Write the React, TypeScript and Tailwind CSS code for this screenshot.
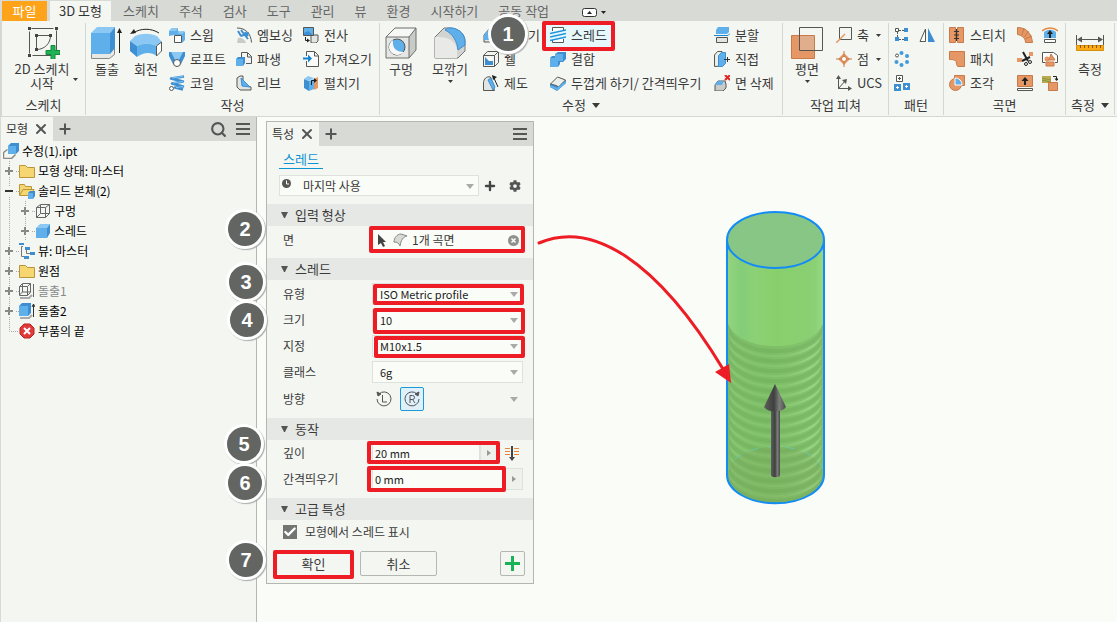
import { useState } from 'react';
import type { ReactNode } from 'react';
import { Plus, Search, X, Check } from 'lucide-react';
import { FaCog } from 'react-icons/fa';

const BLUE = '#5fb0ea';
const DEEP = '#3d8fd2';
const LIGHT = '#8cc8f4';
const LINE = '#555753';
const ORANGE = '#e59866';
const RUST = '#c87a48';

/* ---------- icons ---------- */

function Svg({ size = 16, children }: { size?: number; children: ReactNode }) {
  return (
    <svg width={size} height={size} viewBox={`0 0 ${size} ${size}`} fill="none" className="shrink-0" aria-hidden="true">
      {children}
    </svg>
  );
}

const MenuIcon = () => (
  <Svg>
    <path d="M1 3h14M1 8h14M1 13h14" stroke={LINE} strokeWidth="2" />
  </Svg>
);

const SketchIcon = () => (
  <Svg size={32}>
    <path d="M1.500 1.500h27v27h-27z" stroke={LINE} strokeDasharray="22 5" strokeDashoffset="-2" />
    <path d="M8.500 8.500h14M8.500 8.500v14M22.500 8.500c0 8-6 14-14 14" stroke={LINE} />
    <path d="M0 0h3v3H0zM27 0h3v3h-3zM0 27h3v3H0zM7 7h3v3H7zM21 7h3v3h-3zM7 21h3v3H7z" fill="#444" />
    <path d="M23 18.500h4v5h5v4h-5v5h-4v-5h-5v-4h5z" fill="#1fb254" stroke="#128a3c" />
  </Svg>
);

const ExtrudeIcon = () => (
  <Svg size={32}>
    <path d="M.500 27v4.500h18l5-4V21" fill="#e6e8e4" stroke="#888" />
    <path d="M0 6l6-6h18l-5 6z" fill={LIGHT} />
    <path d="M0 6h19v21H0z" fill={BLUE} />
    <path d="M19 6l5-6v21l-5 6z" fill={DEEP} />
    <path d="M28.500 26V3" stroke="#222" />
    <path d="M28.500 1L26 6h5z" fill="#222" />
  </Svg>
);

const RevolveIcon = () => (
  <Svg size={32}>
    <path d="M0 14l5-5c8-3 14-3 22 0l5 6-5 4c-7-3-14-3-20 0z" fill={LIGHT} />
    <path d="M0 14l7 5v11l-7-6z" fill={DEEP} />
    <path d="M7 19c6-3 13-3 20 0v10c-6-4-13-4-20 1z" fill={BLUE} />
    <path d="M26.500 19l5-4v9l-5 5z" fill="#fff" stroke={LINE} />
    <path d="M3 6c8-5 18-5 26 0" stroke="#222" />
    <path d="M0 7l4-5 2 4z" fill="#222" />
  </Svg>
);

const HoleIcon = () => (
  <Svg size={32}>
    <path d="M1 10L10 1h21l-7 9z" fill="#f7f8f6" />
    <path d="M24 10l7-9v22l-7 8z" fill="#c9cbc8" />
    <path d="M1 10h23v21H1z" fill="#e6e7e5" />
    <path d="M1 10l9-9h21v22l-7 8H1zM1 10h23v21M24 10l7-9" stroke="#6c6e6b" />
    <circle cx="12" cy="20" r="8" fill={BLUE} stroke={LINE} />
    <path d="M8 13c-1 8 3 12 11 12-6 6-15 2-15-5 0-3 2-6 4-7z" fill="#f7f8f6" />
  </Svg>
);

const FilletIcon = () => (
  <Svg size={32}>
    <path d="M1 31V10l9-9h7c9 1 14 7 14 13v10l-7 7z" fill="#d2d4d1" stroke="#777" />
    <path d="M1 31V10h4c11 0 18 6 18 14v7z" fill="#e9eae8" />
    <path d="M11 3l3-2h4c8 1 13 7 13 14v3l-7 5C23 14 19 7 11 3z" fill={BLUE} stroke={DEEP} />
  </Svg>
);

const PlaneIcon = () => (
  <Svg size={32}>
    <path d="M.500 8.500h23v23H.500z" fill={ORANGE} stroke={RUST} />
    <path d="M8.500.500h23v23h-23z" stroke={LINE} />
    <path d="M9 9h14v14H9z" fill="#e0ae8c" />
  </Svg>
);

const MeasureIcon = () => (
  <Svg size={32}>
    <path d="M2.500 8v10M29.500 8v10M4 12.500h24" stroke={LINE} />
    <path d="M3 12.500l5-3v6zM29 12.500l-5-3v6z" fill={LINE} />
    <path d="M2.500 18.500h27v5h-27z" fill="#fbab18" stroke="#d68f0c" />
    <path d="M6.500 18v3M10.500 18v3M14.500 18v3M18.500 18v3M22.500 18v3M26.500 18v3" stroke="#8a5a00" />
  </Svg>
);

const SweepIcon = () => (
  <Svg>
    <path d="M0 4l3-3h6v3l3 1h4v8l-3 3V8H5L0 9z" fill={BLUE} />
    <path d="M0 4l3-3h6L7 4zM8 6l4-2h4l-3 3z" fill={LIGHT} />
    <path d="M5.500 8.500h7v7h-7z" fill="#fff" stroke={LINE} />
  </Svg>
);

const LoftIcon = () => (
  <Svg>
    <path d="M0 1h16v4l-4 8-4 3-4-3-4-8z" fill={DEEP} />
    <path d="M2 1h12l-4 8H6z" fill={LIGHT} />
    <circle cx="8" cy="12" r="3.500" fill="#fff" stroke={LINE} />
  </Svg>
);

const CoilIcon = () => (
  <Svg>
    <path d="M15 1.500L2 3.500l12 3-11 2 11 3-8 1 8 2" stroke={DEEP} strokeWidth="2.500" strokeLinejoin="round" />
    <path d="M14 1.500L3 3M14 6.500L4 8M14 11.500l-7 1" stroke={LIGHT} />
    <circle cx="2.500" cy="13.500" r="2" fill="#fff" stroke={LINE} />
  </Svg>
);

const EmbossIcon = () => (
  <Svg>
    <path d="M1 1c9 0 14 6 14.500 14.500" stroke={LINE} />
    <path d="M1 16l1-5c3-1 7 1 8 5z" fill="#c9cbc8" />
    <path d="M2 4l3 5M5 3l3 4 4 5M5 9l8-3M9 5l3 4" stroke={DEEP} strokeWidth="2" />
  </Svg>
);

const DeriveIcon = () => (
  <Svg>
    <path d="M5.500 6V1.500h6l4 4v7H10" fill="#f4f4f4" stroke={LINE} />
    <path d="M11.500 2v4h4" stroke={LINE} />
    <path d="M0 8l2-2h7v6l-2 3H0z" fill={DEEP} />
    <path d="M0 8h7v7H0z" fill={BLUE} />
  </Svg>
);

const RibIcon = () => (
  <Svg>
    <path d="M1 3l3-2h3v8l8 3v3H4l-3-3z" fill="#e3e5e2" stroke={LINE} />
    <path d="M5 3l9 9-8-1z" fill={BLUE} stroke={DEEP} />
  </Svg>
);

const DecalIcon = () => (
  <Svg>
    <path d="M8 8h7v6l-2 2H8z" fill="#e3e5e2" stroke={LINE} />
    <path d="M.500.500h10v8H.500z" fill={BLUE} stroke={LINE} />
    <path d="M1 6l4-2 5 4H1z" fill={DEEP} />
    <path d="M2.500 10v3.500H6" stroke="#222" />
    <path d="M7 13.500l-3-2v4z" fill="#222" />
  </Svg>
);

const ImportIcon = () => (
  <Svg>
    <path d="M3.500 5V.500h8l4 4v11h-12V10" fill="#fafafa" stroke={LINE} />
    <path d="M11.500 1v4h4" stroke={LINE} />
    <path d="M0 7.500h6" stroke="#1685d1" strokeWidth="2" />
    <path d="M9 7.500l-4-4v8z" fill="#1685d1" />
  </Svg>
);

const UnfoldIcon = () => (
  <Svg>
    <path d="M1 4l5 2v10l-5-3z" fill={DEEP} />
    <path d="M6 6l5-2v10l-5 2z" fill={BLUE} />
    <path d="M1 4l4-3 6 2-5 3z" fill={LIGHT} />
    <path d="M11 4l4-2v11l-4 2z" fill={ORANGE} />
    <path d="M8.500 10V5.500H12" stroke="#222" />
    <path d="M14 5.500L11 3v5z" fill="#222" />
  </Svg>
);

const ChamferIcon = () => (
  <Svg>
    <path d="M1 8l6-7h4l4 5v6l-4 3H1z" fill="#e3e5e2" stroke={LINE} />
    <path d="M1 8l6-7 4 6-5 6H1z" fill={BLUE} />
  </Svg>
);

const ShellIcon = () => (
  <Svg>
    <path d="M.500 4.500l4-4h11v11l-4 4H.500z" fill="#f3f4f2" stroke={LINE} />
    <path d="M.500 4.500h11v11M11.500 4.500l4-4" stroke={LINE} />
    <path d="M3 7h6v6H3z" fill="#fff" />
    <path d="M2 6l4 4h4v4H2z" fill={DEEP} />
  </Svg>
);

const DraftIcon = () => (
  <Svg>
    <path d="M.500 15.500V8c0-4 3-7 7-6l4 13.500z" fill="#e3e5e2" stroke={LINE} />
    <path d="M5 5l3-2 4 9-2 3z" fill={BLUE} stroke={DEEP} />
    <path d="M10 1l5 11" stroke="#222" />
    <path d="M9 0l5 2-4 3z" fill="#222" />
  </Svg>
);

const ThreadIcon = () => (
  <Svg>
    <path d="M2.500 4V.500h11V3M2.500 13v2.500h11V12" fill="#fff" stroke={LINE} />
    <path d="M0 6.500L16 3M0 10l16-3.500M0 13.500L16 10" stroke="#1f94dc" strokeWidth="1.300" />
  </Svg>
);

const CombineIcon = () => (
  <Svg>
    <path d="M5 3l3-2h8v7l-3 3H10v2l-2 3H0V7l2-2h3z" fill={DEEP} />
    <path d="M5 3h8v7H8v6H0V7h5z" fill={BLUE} />
  </Svg>
);

const ThickenIcon = () => (
  <Svg>
    <path d="M0 9v3l7 4 9-8V5z" fill={DEEP} />
    <path d="M.500 9l7-7 8 3-7 7c-2-2-5-2-8-3z" fill="#eceeeb" stroke={LINE} />
    <path d="M0 11l7 3 9-7" stroke={BLUE} strokeWidth="2" />
  </Svg>
);

const SplitIcon = () => (
  <Svg>
    <path d="M2 3l2-3h11v5l-2 2H2z" fill={BLUE} />
    <path d="M0 8.500h14l2-2" stroke="#1685d1" />
    <path d="M2.500 10.500h11v5h-11z" fill="#e3e5e2" stroke={LINE} />
  </Svg>
);

const DirectIcon = () => (
  <Svg>
    <path d="M.500 15.500V4l3-3.500H8V15z" fill="#eceeeb" stroke={LINE} />
    <path d="M4.500 4.500l3-3h4v11l-3 3h-4z" fill={BLUE} stroke={DEEP} />
    <path d="M10 8.500h6M13.500 6v5" stroke="#333" />
  </Svg>
);

const DeleteFaceIcon = () => (
  <Svg>
    <path d="M1 10l3-4h7l1 3v4l-3 3H1z" fill="#c9cbc8" stroke={LINE} />
    <path d="M1 10l3-4h6l-2 4z" fill={BLUE} />
    <path d="M11 0l5 5M16 0l-5 5" stroke="#e02424" strokeWidth="2" />
  </Svg>
);

const AxisIcon = () => (
  <Svg>
    <path d="M3.500.500h12v12h-12z" stroke={LINE} />
    <path d="M0 16L9 7" stroke={ORANGE} strokeWidth="1.500" />
  </Svg>
);

const PointIcon = () => (
  <Svg>
    <path d="M8 2l6 6-6 6-6-6z" fill={ORANGE} />
    <path d="M8 0v16M0 8h16" stroke={RUST} />
    <circle cx="8" cy="8" r="2.500" fill="#fff" stroke={RUST} />
  </Svg>
);

const UcsIcon = () => (
  <Svg>
    <path d="M2.500 2v11.500H14M2.500 13.500L9 6" stroke={LINE} />
    <path d="M2.500 0L0 4h5zM16 13.500L12 11v5zM11 4L6 5l4 4z" fill={LINE} />
  </Svg>
);

const RectPatternIcon = () => (
  <Svg>
    <path d="M3.500 5v6M5 3.500h6M5 12.500h5" stroke={LINE} strokeDasharray="2 1" />
    <path d="M1.500 1.500h3v3h-3z" fill="#fff" stroke={LINE} />
    <path d="M10 1h4v4h-4zM1 10h4v4H1zM10 10h4v4h-4z" fill={DEEP} />
  </Svg>
);

const CircPatternIcon = () => (
  <Svg>
    <circle cx="3" cy="4.500" r="1.500" fill="#fff" stroke={LINE} />
    <g fill="#3f9ade">
      <circle cx="7.500" cy="2" r="2" />
      <circle cx="13" cy="5" r="2" />
      <circle cx="13" cy="11" r="2" />
      <circle cx="7.500" cy="14" r="2" />
      <circle cx="2.500" cy="11" r="2" />
    </g>
  </Svg>
);

const SketchPatternIcon = () => (
  <Svg>
    <path d="M2.500.500h6v6h-6z" fill="#fff" stroke={LINE} />
    <path d="M0 9h7v7H0zM9 8h7v7H9z" fill={DEEP} />
    <path d="M4 3.500h3M5.500 2v3" stroke={LINE} />
    <path d="M2 12.500h3M3.500 11v3M11 11.500h3M12.500 10v3" stroke="#fff" />
  </Svg>
);

const MirrorIcon = () => (
  <Svg>
    <path d="M6.500 2v12.500H1z" fill="#fff" stroke={LINE} />
    <path d="M9 1v14h7z" fill={DEEP} />
  </Svg>
);

const StitchIcon = () => (
  <Svg>
    <path d="M.500.500h6v15h-6zM8.500.500h6v15h-6z" fill={ORANGE} stroke={RUST} />
    <path d="M7.500 2v12M5 4.500h5M5 8h5M5 11.500h5" stroke="#333" />
  </Svg>
);

const PatchIcon = () => (
  <Svg>
    <path d="M.500.500h15v15H9c-2-1-1-3-2-5s-4-2-6.500-2z" fill={ORANGE} stroke={RUST} />
  </Svg>
);

const SculptIcon = () => (
  <Svg>
    <path d="M5.500.500h10v10h-10z" fill={ORANGE} stroke={RUST} />
    <circle cx="6.500" cy="9.500" r="6" fill={ORANGE} stroke={RUST} />
    <path d="M6 10V3c4 0 7 3 7 7z" fill={BLUE} stroke="#fff" />
  </Svg>
);

const RuledIcon = () => (
  <Svg>
    <path d="M.500.500c9 0 14 6 15 15h-7c0-4-3-7-8-8z" fill={ORANGE} stroke={RUST} />
    <path d="M5 8l2-7M7.500 10l4-6M8 12l7-3" stroke={RUST} />
  </Svg>
);

const TrimIcon = () => (
  <Svg>
    <path d="M0 7h5v4H0zM12 1h4v4h-4z" fill={ORANGE} />
    <path d="M6 1l5 9M13 6l-8 4" stroke="#222" strokeWidth="2" />
    <circle cx="9" cy="13" r="1.500" stroke="#222" />
    <circle cx="13" cy="11" r="1.500" stroke="#222" />
  </Svg>
);

const ExtendIcon = () => (
  <Svg>
    <path d="M.500.500h15v11H.500z" fill={ORANGE} stroke={RUST} />
    <path d="M8 10V5" stroke="#222" strokeWidth="2" />
    <path d="M8 2L4.500 6h7z" fill="#222" />
    <path d="M.500 13.500h15v2H.500z" fill="#fff" stroke={LINE} />
  </Svg>
);

const ReplaceFaceIcon = () => (
  <Svg>
    <path d="M0 4c4-4 12-4 16 0" stroke="#e8873c" strokeWidth="1.500" />
    <path d="M2 5c4-3 8-3 12 0v6H2z" fill={BLUE} />
    <path d="M8 11V6" stroke="#222" strokeWidth="2" />
    <path d="M8 3L5 7h6z" fill="#222" />
    <path d="M2.500 12.500h11v3h-11z" fill="#fff" stroke={LINE} />
  </Svg>
);

const RepairIcon = () => (
  <Svg>
    <path d="M3.500 11.500h-3v-10h11l4 3v7H13" fill="#fff" stroke={LINE} />
    <circle cx="5" cy="8" r="2.500" fill={ORANGE} />
    <path d="M9 3l4 6H7zM4 11h8v4H4z" fill={ORANGE} stroke={RUST} />
  </Svg>
);

const ConvertIcon = () => (
  <Svg>
    <path d="M0 1h9v7H0z" fill="#bfa94e" />
    <path d="M0 4c3-2 5 2 9 0M0 6c3-2 5 2 9 0" stroke="#7f9a3a" />
    <path d="M6.500 7.500h9v8h-9z" fill={ORANGE} stroke={RUST} />
    <path d="M11 1.500h3.500V5" stroke="#222" />
    <path d="M14.500 6L12.500 3.500h4z" fill="#222" />
  </Svg>
);

const FolderIcon = () => (
  <Svg>
    <path d="M.500 2.500h6l2 2h7v10H.500z" fill="#f6d670" stroke="#b9963a" />
  </Svg>
);

const OpenFolderIcon = () => (
  <Svg>
    <path d="M.500 12V1.500h5l1 2h6V6" fill="#f6d670" stroke="#b9963a" />
    <path d="M.500 12.500L4 6.500h11l-2 6z" fill="#f6d670" stroke="#b9963a" />
    <path d="M9 10l2-2h5v5l-2 3H9z" fill={DEEP} />
    <path d="M9 10h5v6H9z" fill={BLUE} />
  </Svg>
);

const CubeIcon = () => (
  <Svg>
    <path d="M1 5l4-4h10l-3 4z" fill={LIGHT} />
    <path d="M12 5l3-4v9l-3 5z" fill={DEEP} />
    <path d="M1 5h11v10H1z" fill={BLUE} />
  </Svg>
);

const WireCubeIcon = () => (
  <Svg>
    <path d="M1.500 4.500l4-3h9v9l-4 4h-9zM1.500 4.500h9v10M10.500 4.500l4-3M5.500 2v8.500h9M5.500 10.500l-4 4" stroke="#666" />
  </Svg>
);

const PartIcon = () => (
  <Svg>
    <path d="M.500 15.500v-6l4-3M.500 15.500h8l4-4" stroke="#888" strokeWidth="1.500" />
    <path d="M5 3l3-3h8v8l-3 3H5z" fill={DEEP} />
    <path d="M5 3h8v8H5z" fill={BLUE} />
  </Svg>
);

const ViewIcon = () => (
  <Svg>
    <path d="M4 3.500H2.500v10H5M7.500 7v3.500H11" stroke="#777" />
    <path d="M0 0h5v2H0zM6 4h5v3H6zM11 9h5v3h-5zM5 13h5v3H5z" fill={DEEP} />
  </Svg>
);

const ExtrudeWireIcon = () => (
  <Svg>
    <path d="M1 15h9l3-3" stroke="#aaa" strokeWidth="2" />
    <path d="M.500 3.500l3-3h8v9l-3 3h-8zM.500 3.500h8v9M8.500 3.500l3-3M3.500 1v8h8M3.500 9l-3 3" stroke="#666" />
    <path d="M14.500 1v13" stroke="#666" />
  </Svg>
);

const ExtrudeSmallIcon = () => (
  <Svg>
    <path d="M1 15h9l3-3" stroke="#aaa" strokeWidth="2" />
    <path d="M0 3l3-3h9v10l-3 3H0z" fill={DEEP} />
    <path d="M0 3h9v10H0z" fill={BLUE} />
    <path d="M14.500 2v12M13 4l1.500-3L16 4" stroke="#333" />
  </Svg>
);

const EndIcon = () => (
  <Svg>
    <path d="M5 1h6l4 4v6l-4 4H5l-4-4V5z" fill="#e03a3a" stroke="#b82424" />
    <path d="M5 5l6 6M11 5l-6 6" stroke="#fff" strokeWidth="2" />
  </Svg>
);

function Caret({ small, className = '' }: { small?: boolean; className?: string }) {
  return (
    <svg
      width={small ? 5 : 8}
      height={small ? 3 : 5}
      viewBox="0 0 8 5"
      preserveAspectRatio="none"
      className={`shrink-0 ${className}`}
      aria-hidden="true"
    >
      <path d="M0 0h8L4 5z" fill="currentColor" />
    </svg>
  );
}

/* ---------- ribbon ---------- */

const menuTabs = ['스케치', '주석', '검사', '도구', '관리', '뷰', '환경', '시작하기', '공동 작업'];

function MenuBar() {
  return (
    <nav className="flex h-[21px] items-stretch bg-[#d8dad6] pt-px pl-0.5 text-[13px] leading-5 text-[#666]">
      <button className="mr-[3px] w-[45px] bg-[#ffa31a] text-white">파일</button>
      <button className="mr-0.5 w-[61px] bg-[#f4f6f2] text-[#333]">3D 모형</button>
      {menuTabs.map((t) => (
        <button key={t} className="shrink-0 px-[10px] whitespace-nowrap">
          {t}
        </button>
      ))}
      <button className="ml-[23px] flex items-center gap-1 pt-0.5 text-[#222]" aria-label="리본 최소화">
        <svg width="15" height="9" viewBox="0 0 15 9" fill="none">
          <rect x="0.500" y="0.500" width="14" height="8" rx="2" fill="#fff" stroke="#333" />
          <path d="M5 6h5L7.500 3z" fill="#222" />
        </svg>
        <Caret small />
      </button>
    </nav>
  );
}

function Group({ label, width, caret, children }: { label: string; width: string; caret?: boolean; children: ReactNode }) {
  return (
    <section className={`flex shrink-0 flex-col border-r border-[#d5d7d3] ${width}`}>
      <div className="flex h-[72px]">{children}</div>
      <h2 className="flex h-5 items-center justify-center gap-1.5">
        {label}
        {caret && <Caret />}
      </h2>
    </section>
  );
}

function BigButton({ icon, label, width, caret }: { icon: ReactNode; label: string; width: string; caret?: boolean }) {
  return (
    <button className={`flex shrink-0 flex-col items-center pt-1 ${width}`}>
      {icon}
      <span className="leading-5 whitespace-nowrap">{label}</span>
      {caret && <Caret small className="mt-px" />}
    </button>
  );
}

function Tool({ icon, label, caret, active }: { icon: ReactNode; label?: string; caret?: boolean; active?: boolean }) {
  return (
    <button
      aria-label={label || '도구'}
      className={`flex h-6 items-center gap-[5px] pr-1 pl-[5px] whitespace-nowrap ${
        active ? 'bg-[#e6f8fc] outline outline-[#1a9ad6]' : ''
      }`}
    >
      {icon}
      {label && <span>{label}</span>}
      {caret && <Caret small className="ml-0.5" />}
    </button>
  );
}

function Column({ width, children }: { width: string; children: ReactNode }) {
  return <div className={`flex shrink-0 flex-col items-start ${width}`}>{children}</div>;
}

function Ribbon() {
  return (
    <div className="flex h-24 items-start overflow-hidden border-b border-l-2 border-[#d5d7d3] bg-[#f4f6f2] pt-0.5 text-[13px] leading-5 text-[#3a3a3a]">
      <Group label="스케치" width="w-[84px]">
        <button className="flex w-full flex-col items-center pt-1">
          <SketchIcon />
          <span className="flex items-end gap-1 pt-0.5 pl-1.5">
            <span className="flex flex-col leading-4">
              <span>2D 스케치</span>
              <span className="leading-3">시작</span>
            </span>
            <Caret small className="mb-2" />
          </span>
        </button>
      </Group>

      <Group label="작성" width="w-[294px]">
        <BigButton icon={<ExtrudeIcon />} label="돌출" width="w-[42px]" />
        <BigButton icon={<RevolveIcon />} label="회전" width="w-9" />
        <Column width="w-[67px]">
          <Tool icon={<SweepIcon />} label="스윕" />
          <Tool icon={<LoftIcon />} label="로프트" />
          <Tool icon={<CoilIcon />} label="코일" />
        </Column>
        <Column width="w-[67px]">
          <Tool icon={<EmbossIcon />} label="엠보싱" />
          <Tool icon={<DeriveIcon />} label="파생" />
          <Tool icon={<RibIcon />} label="리브" />
        </Column>
        <Column width="w-20">
          <Tool icon={<DecalIcon />} label="전사" />
          <Tool icon={<ImportIcon />} label="가져오기" />
          <Tool icon={<UnfoldIcon />} label="펼치기" />
        </Column>
      </Group>

      <Group label="수정" width="w-[403px]" caret>
        <BigButton icon={<HoleIcon />} label="구멍" width="w-[42px]" />
        <BigButton icon={<FilletIcon />} label="모깎기" width="w-14" caret />
        <Column width="w-[67px]">
          <Tool icon={<ChamferIcon />} label="모따기" />
          <Tool icon={<ShellIcon />} label="쉘" />
          <Tool icon={<DraftIcon />} label="제도" />
        </Column>
        <Column width="w-[164px]">
          <Tool icon={<ThreadIcon />} label="스레드" active />
          <Tool icon={<CombineIcon />} label="결합" />
          <Tool icon={<ThickenIcon />} label="두껍게 하기/ 간격띄우기" />
        </Column>
        <Column width="w-[72px]">
          <Tool icon={<SplitIcon />} label="분할" />
          <Tool icon={<DirectIcon />} label="직접" />
          <Tool icon={<DeleteFaceIcon />} label="면 삭제" />
        </Column>
      </Group>

      <Group label="작업 피쳐" width="w-[106px]">
        <BigButton icon={<PlaneIcon />} label="평면" width="w-12" caret />
        <Column width="w-14">
          <Tool icon={<AxisIcon />} label="축" caret />
          <Tool icon={<PointIcon />} label="점" caret />
          <Tool icon={<UcsIcon />} label="UCS" />
        </Column>
      </Group>

      <Group label="패턴" width="w-[55px]">
        <Column width="w-[25px]">
          <Tool icon={<RectPatternIcon />} />
          <Tool icon={<CircPatternIcon />} />
          <Tool icon={<SketchPatternIcon />} />
        </Column>
        <Column width="w-[25px]">
          <Tool icon={<MirrorIcon />} />
        </Column>
      </Group>

      <Group label="곡면" width="w-[122px]">
        <Column width="w-[68px]">
          <Tool icon={<StitchIcon />} label="스티치" />
          <Tool icon={<PatchIcon />} label="패치" />
          <Tool icon={<SculptIcon />} label="조각" />
        </Column>
        <Column width="w-[25px]">
          <Tool icon={<RuledIcon />} />
          <Tool icon={<TrimIcon />} />
          <Tool icon={<ExtendIcon />} />
        </Column>
        <Column width="w-[25px]">
          <Tool icon={<ReplaceFaceIcon />} />
          <Tool icon={<RepairIcon />} />
          <Tool icon={<ConvertIcon />} />
        </Column>
      </Group>

      <Group label="측정" width="w-[49px]" caret>
        <BigButton icon={<MeasureIcon />} label="측정" width="w-12" />
      </Group>
    </div>
  );
}

/* ---------- model browser ---------- */

interface TreeNode {
  label: string;
  icon: ReactNode;
  level: number;
  toggle?: '+' | '-';
  muted?: boolean;
}

const nodes: TreeNode[] = [
  { label: '모형 상태: 마스터', icon: <FolderIcon />, level: 0, toggle: '+' },
  { label: '솔리드 본체(2)', icon: <OpenFolderIcon />, level: 0, toggle: '-' },
  { label: '구멍', icon: <WireCubeIcon />, level: 1, toggle: '+' },
  { label: '스레드', icon: <CubeIcon />, level: 1, toggle: '+' },
  { label: '뷰: 마스터', icon: <ViewIcon />, level: 0, toggle: '+' },
  { label: '원점', icon: <FolderIcon />, level: 0, toggle: '+' },
  { label: '돌출1', icon: <ExtrudeWireIcon />, level: 0, toggle: '+', muted: true },
  { label: '돌출2', icon: <ExtrudeSmallIcon />, level: 0, toggle: '+' },
  { label: '부품의 끝', icon: <EndIcon />, level: 0 },
];

// Dotted guide lines plus the expander for one row
function Guide({ node }: { node: TreeNode }) {
  return (
    <svg width="16" height="20" viewBox="0 0 16 20" fill="none" className="shrink-0" aria-hidden="true">
      <path d={node.toggle ? 'M6.500 0v20M11 10.500h5' : 'M6.500 0v10.500H16'} stroke="#aaa" strokeDasharray="1 1" />
      {node.toggle && <path d="M1 5h11v11H1z" fill="#f4f6f2" />}
      {node.toggle === '+' && <path d="M2 10h8M6 6v8" stroke="#888" strokeWidth="2" />}
      {node.toggle === '-' && <path d="M2 10h8" stroke="#333" strokeWidth="2" />}
    </svg>
  );
}

function PanelTabs({ label }: { label: string }) {
  return (
    <div className="flex h-6 items-center bg-[#d8dad6] text-xs text-[#333]">
      <div className="flex h-full w-[52px] items-center justify-between bg-[#f4f6f2] pr-1 pl-[5px]">
        {label}
        <button type="button" aria-label="닫기">
          <X className="h-4 w-4 text-[#555]" strokeWidth={3} />
        </button>
      </div>
      <button type="button" className="ml-1" aria-label="추가">
        <Plus className="h-4 w-4 text-[#555]" strokeWidth={3} />
      </button>
    </div>
  );
}

function Browser() {
  return (
    <aside className="w-[257px] shrink-0 border-r border-l border-r-[#b5b7b3] border-l-[#d8dad6] bg-[#f4f6f2]">
      <div className="flex h-6 items-center bg-[#d8dad6] pr-[5px]">
        <div className="flex-1">
          <PanelTabs label="모형" />
        </div>
        <button aria-label="검색" className="mr-2">
          <Search className="h-[17px] w-[17px] text-[#555]" strokeWidth={3} />
        </button>
        <button aria-label="메뉴">
          <MenuIcon />
        </button>
      </div>
      <ul className="pl-0.5 text-xs leading-5 text-black">
        <li className="flex h-5 items-center gap-[3px]">
          <PartIcon />
          수정(1).ipt
        </li>
        {nodes.map((n) => (
          <li key={n.label} className="flex h-5 items-center">
            {n.level === 1 && (
              <svg width="16" height="20" viewBox="0 0 16 20" aria-hidden="true">
                <path d="M6.500 0v20" stroke="#aaa" strokeDasharray="1 1" />
              </svg>
            )}
            <Guide node={n} />
            {n.icon}
            <span className={n.muted ? 'pl-[3px] text-[#888]' : 'pl-[3px]'}>{n.label}</span>
          </li>
        ))}
      </ul>
    </aside>
  );
}

/* ---------- properties panel ---------- */

function Section({ title }: { title: string }) {
  return (
    <h3 className="flex h-[22px] items-center gap-[7px] bg-[#e6e8e5] pl-3.5 text-[13px] text-[#3a3a3a]">
      <svg width="7" height="6" viewBox="0 0 7 6" aria-hidden="true">
        <path d="M0 0h7L4 6H3z" fill="#555" />
      </svg>
      {title}
    </h3>
  );
}

function Row({ label, htmlFor, children }: { label: string; htmlFor: string; children: ReactNode }) {
  return (
    <div className="flex h-[26px] items-center pr-2.5 pl-4">
      <label htmlFor={htmlFor} className="w-[89px] shrink-0">
        {label}
      </label>
      {children}
    </div>
  );
}

function SelectRow({ id, label, options }: { id: string; label: string; options: string[] }) {
  return (
    <Row label={label} htmlFor={id}>
      <div className="relative flex-1">
        <select
          id={id}
          className="block h-[22px] w-full appearance-none border border-[#dfe1dd] bg-[#fafcf7] pl-[7px] text-[11px] text-[#222] outline-none"
        >
          {options.map((o) => (
            <option key={o}>{o}</option>
          ))}
        </select>
        <Caret className="pointer-events-none absolute top-[9px] right-[5px] text-[#aaa]" />
      </div>
    </Row>
  );
}

function Stepper({ label }: { label: string }) {
  return (
    <button
      type="button"
      aria-label={label}
      className="flex h-[22px] w-[18px] items-center justify-center border border-[#dfe1dd] bg-[#eff1ed]"
    >
      <svg width="4" height="6" viewBox="0 0 4 6">
        <path d="M0 0l4 3-4 3z" fill="#999" />
      </svg>
    </button>
  );
}

function Properties() {
  const [depth, setDepth] = useState('20 mm');
  const [offset, setOffset] = useState('0 mm');
  const [showThread, setShowThread] = useState(true);
  const [right, setRight] = useState(true);

  return (
    <form
      className="mt-1 ml-[9px] w-[268px] border border-[#b5b7b3] bg-[#f4f6f2] pb-[7px] text-xs leading-5 text-[#3a3a3a]"
      onSubmit={(e) => e.preventDefault()}
    >
      <div className="flex h-6 items-center bg-[#d8dad6] pr-[5px]">
        <div className="flex-1">
          <PanelTabs label="특성" />
        </div>
        <button type="button" aria-label="메뉴">
          <MenuIcon />
        </button>
      </div>

      <div className="flex pt-1 pl-3">
        <a href="#thread" className="h-[19px] border-b border-[#0f94d2] px-1 text-[13px] leading-[18px] text-[#0f94d2]">
          스레드
        </a>
      </div>

      <div className="mt-1.5 mb-2 flex items-center pl-3">
        <div className="relative w-[200px]">
          <svg width="9" height="9" viewBox="0 0 9 9" fill="none" className="absolute top-1 left-[3px]">
            <circle cx="4.500" cy="4.500" r="4.500" fill="#555" />
            <path d="M4.500 1.500v3.500h2.500" stroke="#fff" />
          </svg>
          <select
            aria-label="사전 설정"
            className="block h-[21px] w-full appearance-none border border-[#dfe1dd] bg-[#fafcf7] pl-[23px] text-xs outline-none"
          >
            <option>마지막 사용</option>
          </select>
          <Caret className="pointer-events-none absolute top-[9px] right-[5px] text-[#aaa]" />
        </div>
        <button type="button" aria-label="사전 설정 추가" className="ml-1">
          <Plus className="h-3.5 w-3.5 text-[#444]" strokeWidth={4} />
        </button>
        <button type="button" aria-label="설정" className="ml-3">
          <FaCog className="h-3 w-3 text-[#555]" />
        </button>
      </div>

      <Section title="입력 형상" />
      <div className="flex h-8 items-center pr-2.5 pb-1 pl-4">
        <span className="w-[89px]">면</span>
        <div className="flex h-[22px] flex-1 items-center bg-[#fafcf7] pl-1.5">
          <svg width="8" height="13" viewBox="0 0 8 13">
            <path d="M0 0l8 8H5l2 4-2 1-2-4-3 2z" fill="#444" />
          </svg>
          <svg width="15" height="14" viewBox="0 0 15 14" fill="none" className="ml-[7px]">
            <path d="M1 9C1 5 4 1 8 1l6 2c-4 1-6 4-7 10-1-3-3-4-6-4z" fill="#d8dad6" stroke="#888" />
          </svg>
          <span className="ml-1 flex-1">1개 곡면</span>
          <button type="button" aria-label="선택 지우기" className="mr-1">
            <svg width="11" height="11" viewBox="0 0 11 11">
              <circle cx="5.500" cy="5.500" r="5.500" fill="#8f918e" />
              <path d="M3.500 3.500l4 4M7.500 3.500l-4 4" stroke="#fff" strokeWidth="1.500" />
            </svg>
          </button>
        </div>
      </div>

      <Section title="스레드" />
      <div className="pt-px pb-[5px]">
        <SelectRow id="type" label="유형" options={['ISO Metric profile']} />
        <SelectRow id="size" label="크기" options={['10']} />
        <SelectRow id="designation" label="지정" options={['M10x1.5']} />
        <SelectRow id="class" label="클래스" options={['6g']} />
        <div className="flex h-7 items-center pr-[15px] pl-4">
          <span className="w-[89px]">방향</span>
          <button
            type="button"
            aria-label="왼쪽"
            onClick={() => setRight(false)}
            className={`flex h-6 w-6 items-center justify-center rounded-xs border ${
              right ? 'border-transparent' : 'border-[#1a9ad6] bg-[#dff0fa]'
            }`}
          >
            <svg width="18" height="18" viewBox="0 0 18 18" fill="none" stroke="#555">
              <path d="M4 4a7 7 0 1 1-2 5M7.500 5v7H12" />
              <path d="M2 2l1 4 3-2z" fill="#555" />
            </svg>
          </button>
          <button
            type="button"
            aria-label="오른쪽"
            onClick={() => setRight(true)}
            className={`ml-1 flex h-6 w-6 items-center justify-center rounded-xs border ${
              right ? 'border-[#1a9ad6] bg-[#dff0fa]' : 'border-transparent'
            }`}
          >
            <svg width="18" height="18" viewBox="0 0 18 18" fill="none" stroke="#555">
              <path d="M14 4a7 7 0 1 0 2 5M7 13V5.500h2.500a2 2 0 0 1 0 4H7M9.500 9.500L12 13" />
              <path d="M16 2l-1 4-3-2z" fill="#555" />
            </svg>
          </button>
          <Caret className="ml-auto text-[#aaa]" />
        </div>
      </div>

      <Section title="동작" />
      <div className="pb-1.5">
        <Row label="깊이" htmlFor="depth">
          <input
            id="depth"
            value={depth}
            onChange={(e) => setDepth(e.target.value)}
            className="h-[22px] w-[108px] border border-[#dfe1dd] bg-[#fafcf7] px-0.5 text-[11px] text-[#222] outline-none"
          />
          <Stepper label="깊이 옵션" />
          <button type="button" aria-label="전체 길이" className="ml-1.5">
            <svg width="16" height="16" viewBox="0 0 16 16" fill="none">
              <path d="M1 3.500h5M1 6.500h5M1 9.500h5M10 3.500h5M10 6.500h5M10 9.500h5" stroke="#e8873c" />
              <path d="M8 1v12" stroke="#444" strokeWidth="2" />
              <path d="M5 12h6l-3 4z" fill="#444" />
            </svg>
          </button>
        </Row>
        <Row label="간격띄우기" htmlFor="offset">
          <input
            id="offset"
            value={offset}
            onChange={(e) => setOffset(e.target.value)}
            className="h-[22px] w-[133px] border border-[#dfe1dd] bg-[#fafcf7] px-0.5 text-[11px] text-[#222] outline-none"
          />
          <Stepper label="간격띄우기 옵션" />
        </Row>
      </div>

      <Section title="고급 특성" />
      <label className="flex h-6 items-center pl-4">
        <span className="relative mr-2 flex h-3.5 w-3.5">
          <input
            type="checkbox"
            checked={showThread}
            onChange={(e) => setShowThread(e.target.checked)}
            className="h-3.5 w-3.5 appearance-none border border-[#737572] checked:bg-[#737572]"
          />
          {showThread && <Check className="pointer-events-none absolute inset-0 h-3.5 w-3.5 text-white" strokeWidth={4} />}
        </span>
        모형에서 스레드 표시
      </label>

      <div className="mt-[7px] flex items-center px-2 text-[13px]">
        <button className="h-[25px] w-[77px] border border-[#b5b7b3]">확인</button>
        <button type="button" className="ml-2 h-[25px] w-[77px] rounded-xs border border-[#b5b7b3]">
          취소
        </button>
        <button
          type="button"
          aria-label="적용 후 새로 만들기"
          className="ml-auto flex h-[25px] w-[25px] items-center justify-center rounded-xs border border-[#b5b7b3]"
        >
          <svg width="15" height="15" viewBox="0 0 15 15">
            <path d="M6 0h3v6h6v3H9v6H6V9H0V6h6z" fill="#19b257" />
          </svg>
        </button>
      </div>
    </form>
  );
}

/* ---------- 3D view ---------- */

const threads = Array.from({ length: 17 }, (_, i) => 112 + i * 10);

function Cylinder() {
  return (
    <svg width="100" height="294" viewBox="0 0 100 294" fill="none" className="absolute top-[94px] left-[469px]" aria-hidden="true">
      <defs>
        <linearGradient id="body" x1="0" x2="1">
          <stop offset="0" stopColor="#94d47e" />
          <stop offset="0.150" stopColor="#84cd78" />
          <stop offset="0.300" stopColor="#8cd175" />
          <stop offset="0.520" stopColor="#88cf6c" />
          <stop offset="0.900" stopColor="#8ad074" />
          <stop offset="1" stopColor="#98d884" />
        </linearGradient>
        <linearGradient id="thread" x1="0" x2="1">
          <stop offset="0" stopColor="#84c26e" />
          <stop offset="0.400" stopColor="#7dbd66" />
          <stop offset="1" stopColor="#88c672" />
        </linearGradient>
        <linearGradient id="glint" x1="0" x2="1">
          <stop offset="0" stopColor="#96d282" stopOpacity="0.300" />
          <stop offset="0.600" stopColor="#96d282" stopOpacity="0.300" />
          <stop offset="0.850" stopColor="#a0da8e" stopOpacity="0.800" />
          <stop offset="1" stopColor="#96d282" stopOpacity="0.400" />
        </linearGradient>
        <linearGradient id="steel" x1="0" x2="1">
          <stop offset="0" stopColor="#5e605d" />
          <stop offset="0.450" stopColor="#3e403d" />
          <stop offset="0.700" stopColor="#7c7e7b" />
          <stop offset="1" stopColor="#4a4c49" />
        </linearGradient>
        <clipPath id="lower">
          <path d="M1 107a48 28 0 0 0 97 0v157a48 28 0 0 1-97 0z" />
        </clipPath>
      </defs>
      <path d="M1 29v235a48 28 0 0 0 97 0V29z" fill="url(#body)" />
      <g clipPath="url(#lower)">
        <path d="M0 100h100v194H0z" fill="url(#thread)" />
        {threads.map((y) => (
          <g key={y}>
            <path d={`M1 ${y}a48 28 0 0 0 97 0`} stroke="#6eae5a" strokeOpacity="0.450" strokeWidth="4" />
            <path d={`M1 ${y + 5}a48 28 0 0 0 97 0`} stroke="url(#glint)" strokeWidth="2" />
          </g>
        ))}
        <ellipse cx="49.500" cy="264" rx="48.500" ry="28" fill="#7a9e58" fillOpacity="0.220" />
      </g>
      <path d="M1 264a48 28 0 0 1 97 0" stroke="#6cc6a8" strokeDasharray="8 10" />
      <ellipse cx="49.500" cy="29" rx="48.500" ry="28" fill="#88c685" />
      <path d="M1 29v235a48 28 0 0 0 97 0V29" stroke="#148cf5" strokeWidth="2" />
      <ellipse cx="49.500" cy="29" rx="48.500" ry="28" stroke="#148cf5" strokeWidth="2" />
      <path d="M45 198h9v66a4 2 0 0 1-9 0z" fill="url(#steel)" />
      <path d="M49 173l11 23c-4 6-18 6-22 0z" fill="url(#steel)" />
    </svg>
  );
}

function Viewport() {
  return (
    <main className="relative min-w-0 flex-1 overflow-hidden bg-[#fafcf8]">
      <Cylinder />
      <Properties />
      <svg width="200" height="155" viewBox="0 0 200 155" fill="none" className="absolute top-[114px] left-[279px]" aria-hidden="true">
        <path d="M3 12C56-11 121 29 187 138" stroke="#ee1c25" strokeWidth="3" strokeLinecap="round" />
        <path d="M195 152l-16-11 14-8z" fill="#ee1c25" />
      </svg>
    </main>
  );
}

/* ---------- step callouts ---------- */

const steps = [
  { n: 1, at: 'left-[488px] top-[14px]' },
  { n: 2, at: 'left-[225px] top-[209px]' },
  { n: 3, at: 'left-[226px] top-[262px]' },
  { n: 4, at: 'left-[227px] top-[300px]' },
  { n: 5, at: 'left-[224px] top-[424px]' },
  { n: 6, at: 'left-[225px] top-[463px]' },
  { n: 7, at: 'left-[226px] top-[540px]' },
];

const frames = [
  'left-[542px] top-[21px] w-[73px] h-[30px]',
  'left-[369px] top-[226px] w-[156px] h-[27px]',
  'left-[373px] top-[284px] w-[151px] h-[21px]',
  'left-[373px] top-[308px] w-[152px] h-[26px]',
  'left-[374px] top-[336px] w-[151px] h-[22px]',
  'left-[367px] top-[441px] w-[133px] h-[23px]',
  'left-[367px] top-[466px] w-[139px] h-[26px]',
  'left-[273px] top-[550px] w-[81px] h-[29px]',
];

function Callouts() {
  return (
    <div className="pointer-events-none">
      {frames.map((f) => (
        <div key={f} className={`absolute rounded-xs border-4 border-[#ee1c25] ${f}`} />
      ))}
      {steps.map((s) => (
        <div
          key={s.n}
          className={`absolute flex h-10 w-10 items-center justify-center rounded-full border-3 border-white bg-[#636562] font-['Liberation_Sans',sans-serif] text-xl font-bold text-white shadow-[1px_1px_1px_#aaa] ${s.at}`}
        >
          {s.n}
        </div>
      ))}
    </div>
  );
}

export default function App() {
  return (
    <div className="relative flex min-h-screen flex-col overflow-hidden bg-[#fafcf8] font-['Noto_Sans_CJK_KR','Noto_Sans',sans-serif]">
      <MenuBar />
      <Ribbon />
      <div className="flex flex-1">
        <Browser />
        <Viewport />
      </div>
      <Callouts />
    </div>
  );
}
